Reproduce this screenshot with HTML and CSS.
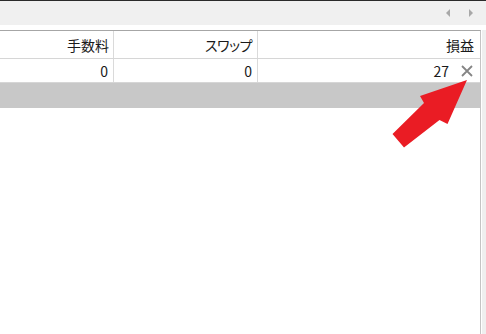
FILE: index.html
```html
<!DOCTYPE html>
<html lang="ja">
<head>
<meta charset="utf-8">
<link rel="stylesheet" href="styles.css">
</head>
<body>
<div class="topline"></div>
<div class="toolbar">
  <span class="tri tri-left"></span>
  <span class="tri tri-right"></span>
</div>
<div class="gap"></div>
<div class="main">
  <div class="panel">
    <div class="row head">
      <div class="cell">手数料</div>
      <div class="cell"><span class="kana">スワップ</span></div>
      <div class="cell last">損益</div>
    </div>
    <div class="row data">
      <div class="cell">0</div>
      <div class="cell">0</div>
      <div class="cell last pl">
        <span>27</span>
        <svg class="close" width="12" height="12" viewBox="0 0 12 12"><path d="M1 1 L11 11 M11 1 L1 11" stroke="#858585" stroke-width="1.8" fill="none"/></svg>
      </div>
    </div>
    <div class="row sel"></div>
  </div>
  <div class="scroll"></div>
</div>
<svg class="arrow" width="486" height="334" viewBox="0 0 486 334">
  <polygon points="467,80 420,96 424,103 392.5,134 404,147.5 439.5,120 447.5,124" fill="#ea1c24"/>
</svg>
</body>
</html>
```
FILE: styles.css
```css
html, body {
  margin: 0;
  padding: 0;
  background: #ffffff;
  width: 486px;
  height: 334px;
  overflow: hidden;
  font-family: "Noto Sans CJK JP", "Noto Sans", sans-serif;
  font-size: 14px;
  color: #1a1a1a;
}
.topline {
  height: 1px;
  background: #2a2a2a;
}
.toolbar {
  height: 24px;
  background: #f0f0f0;
  display: flex;
  justify-content: flex-end;
  align-items: center;
  gap: 19px;
  padding-right: 13px;
}
.tri {
  width: 0;
  height: 0;
  border-top: 4px solid transparent;
  border-bottom: 4px solid transparent;
  margin-top: -1px;
}
.tri-left {
  border-right: 4px solid #a8a8a8;
}
.tri-right {
  border-left: 4px solid #a8a8a8;
}
.gap {
  height: 5px;
  background: #ffffff;
}
.main {
  display: flex;
  height: 304px;
}
.panel {
  width: 480px;
  border-top: 1px solid #a6a6a6;
  border-right: 1px solid #c4c4c4;
  background: #ffffff;
}
.scroll {
  flex: 1;
  background: #efefef;
  border-left: 1px solid #ffffff;
}
.row {
  display: grid;
  grid-template-columns: 114px 144px 1fr;
}
.head {
  height: 27px;
  border-bottom: 1px solid #d6d6d6;
}
.data {
  height: 23px;
  border-bottom: 1px solid #d6d6d6;
}
.sel {
  height: 25px;
  background: #c8c8c8;
}
.cell {
  display: flex;
  align-items: center;
  justify-content: flex-end;
  padding-right: 5px;
  border-right: 1px solid #dadada;
  white-space: nowrap;
  line-height: 1;
}
.head .cell {
  padding-right: 4px;
  padding-top: 1px;
}
.kana {
  font-feature-settings: "palt";
  letter-spacing: -0.5px;
  margin-right: 1px;
}
.cell.last {
  border-right: none;
  padding-right: 6px;
}
.cell.pl {
  padding-right: 7px;
}
.close {
  margin-left: 12px;
  margin-top: 1px;
}
.arrow {
  position: absolute;
  left: 0;
  top: 0;
  pointer-events: none;
}
```
